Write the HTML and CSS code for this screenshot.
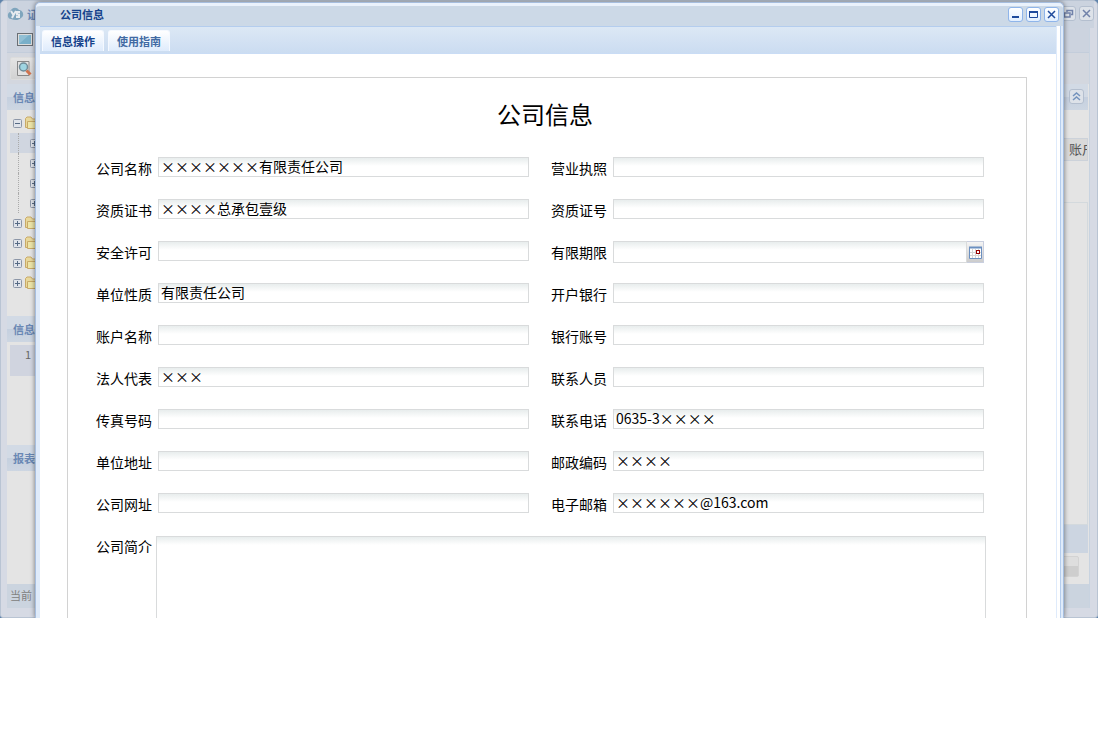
FILE: index.html
```
<!DOCTYPE html>
<html lang="zh-CN">
<head>
    <meta charset="UTF-8">
    <meta name="viewport" content="width=device-width, initial-scale=1.0">
    <title>公司信息</title>
    <link rel="stylesheet" href="styles.css">
</head>
<body>
    <svg class="defs" aria-hidden="true">
        <symbol id="plus" viewBox="0 0 9 9">
            <rect x="0.5" y="0.5" width="8" height="8" rx="1" fill="#dfe3ea" stroke="#8d97a8"/>
            <path d="M2 4.5H7M4.5 2V7" stroke="#566a85"/>
        </symbol>
        <symbol id="minus" viewBox="0 0 9 9">
            <rect x="0.5" y="0.5" width="8" height="8" rx="1" fill="#dfe3ea" stroke="#8d97a8"/>
            <path d="M2 4.5H7" stroke="#566a85"/>
        </symbol>
        <symbol id="folder" viewBox="0 0 16 14">
            <path d="M1.5 11.5V2.5L3 1H7L8.5 3H13.5V11.5Z" fill="#e8d89c" stroke="#c9aa68"/>
            <path d="M3.5 12.5V5.5H15.5V12.5Z" fill="#ede5a8" stroke="#c9aa68"/>
        </symbol>
    </svg>
    <div class="desktop">
        <!-- main window -->
        <div class="app">
            <div class="app-head">
                <svg width="17" height="14" viewBox="0 0 17 14">
                    <path d="M4 12C0 12 0 6 3 5C4 1 9-1 12 3C16 3 18 9 14 11C11 14 7 13 4 12Z" fill="#7fa5bd"/>
                    <path d="M4 4L6.5 8L9 4M6.5 8L5 11M13 5H10V7.5H12V10H9" fill="none" stroke="#e6ebef" stroke-width="2"/>
                </svg>
                <span>证</span>
                <div class="tools">
                    <button class="tool" aria-label="还原">
                        <svg width="13" height="13" viewBox="0 0 13 13"><path d="M5 5V3.5H10.5V7.5H9M2.5 6H8V10H2.5Z" fill="none" stroke="#7182aa" stroke-width="1.5"/></svg>
                    </button>
                    <button class="tool" aria-label="关闭主窗口">
                        <svg width="13" height="13" viewBox="0 0 13 13"><path d="M3 3L10 10M10 3L3 10" stroke="#7182aa" stroke-width="1.5"/></svg>
                    </button>
                </div>
            </div>
            <div class="app-body">
                <div class="app-tabs">
                    <svg width="16" height="14" viewBox="0 0 16 14">
                        <rect x="0.5" y="0.5" width="15" height="12" fill="#ddd" stroke="#6a6f75"/>
                        <rect x="2" y="2" width="12" height="9" fill="#79afc9"/>
                        <path d="M2 11V2H12Z" fill="#91bfd4"/>
                    </svg>
                </div>
                <div class="app-tools">
                    <button class="search" aria-label="查询">
                        <svg width="16" height="17" viewBox="0 0 16 17">
                            <path d="M1.5 1V15.5H13V1.5H1" fill="#e2e2e2" stroke="#888"/>
                            <circle cx="7.5" cy="7" r="4" fill="#9ed5e2" stroke="#708c98" stroke-width="1.5"/>
                            <path d="M10.5 10.5L14.5 14.5" stroke="#d0734e" stroke-width="3"/>
                        </svg>
                    </button>
                </div>
                <div class="app-main">
                    <div class="side">
                        <h2>信息</h2>
                        <ul class="tree">
                            <li><svg width="9" height="9"><use href="#minus"/></svg><svg width="16" height="14"><use href="#folder"/></svg></li>
                            <li class="child on"><svg width="9" height="9"><use href="#plus"/></svg></li>
                            <li class="child"><svg width="9" height="9"><use href="#plus"/></svg></li>
                            <li class="child"><svg width="9" height="9"><use href="#plus"/></svg></li>
                            <li class="child"><svg width="9" height="9"><use href="#plus"/></svg></li>
                            <li><svg width="9" height="9"><use href="#plus"/></svg><svg width="16" height="14"><use href="#folder"/></svg></li>
                            <li><svg width="9" height="9"><use href="#plus"/></svg><svg width="16" height="14"><use href="#folder"/></svg></li>
                            <li><svg width="9" height="9"><use href="#plus"/></svg><svg width="16" height="14"><use href="#folder"/></svg></li>
                            <li><svg width="9" height="9"><use href="#plus"/></svg><svg width="16" height="14"><use href="#folder"/></svg></li>
                        </ul>
                        <h2>信息</h2>
                        <div class="notice"><p>1</p></div>
                        <h2>报表</h2>
                    </div>
                    <div class="content">
                        <div class="content-head">
                            <button class="tool" aria-label="收起">
                                <svg width="13" height="13" viewBox="0 0 13 13"><path d="M3 6L6.5 3L10 6M3 10L6.5 7L10 10" fill="none" stroke="#7493bd" stroke-width="1.5"/></svg>
                            </button>
                        </div>
                        <div class="grid-head"><span>账户</span></div>
                        <div class="grid-body"></div>
                        <div class="pager"></div>
                        <div class="actions"></div>
                    </div>
                </div>
                <div class="status">当前</div>
            </div>
        </div>

        <!-- company dialog -->
        <div class="dialog">
            <div class="dialog-head">
                <strong>公司信息</strong>
                <div class="tools">
                    <button class="tool" aria-label="最小化">
                        <svg width="13" height="13" viewBox="0 0 13 13"><path d="M3 9H10" stroke="#1f4a9c" stroke-width="2"/></svg>
                    </button>
                    <button class="tool" aria-label="最大化">
                        <svg width="13" height="13" viewBox="0 0 13 13"><path d="M2.5 3.5H10.5V9.5H2.5Z" fill="none" stroke="#1f4a9c"/><path d="M2 4H11" stroke="#1f4a9c" stroke-width="2"/></svg>
                    </button>
                    <button class="tool" aria-label="关闭">
                        <svg width="13" height="13" viewBox="0 0 13 13"><path d="M3 3L10 10M10 3L3 10" stroke="#1f4a9c" stroke-width="1.5"/></svg>
                    </button>
                </div>
            </div>
            <div class="dialog-body">
                <div class="panel">
                    <div class="tabs">
                        <button class="tab active">信息操作</button>
                        <button class="tab">使用指南</button>
                    </div>
                    <form class="sheet">
                        <h1>公司信息</h1>
                        <div class="fields">
                            <label for="name">公司名称</label>
                            <input id="name" type="text" value="×××××××有限责任公司">
                            <label for="license">营业执照</label>
                            <input id="license" type="text">

                            <label for="cert">资质证书</label>
                            <input id="cert" type="text" value="××××总承包壹级">
                            <label for="certNo">资质证号</label>
                            <input id="certNo" type="text">

                            <label for="safety">安全许可</label>
                            <input id="safety" type="text">
                            <label for="expire">有限期限</label>
                            <div class="date">
                                <input id="expire" type="text">
                                <button type="button" aria-label="选择日期">
                                    <svg width="13" height="13" viewBox="0 0 13 13">
                                        <path d="M0.5 1.5H12.5V12.5H0.5Z" fill="#fff" stroke="#6a8fc0"/>
                                        <path d="M0 1.5H13" stroke="#6a8fc0" stroke-width="2"/>
                                        <path d="M3.5 3V12M6.5 3V12M9.5 3V12M1 6.5H12M1 9.5H12" stroke="#d5d5d5"/>
                                        <rect x="7.5" y="4.5" width="3" height="3" fill="#fff" stroke="#900"/>
                                    </svg>
                                </button>
                            </div>

                            <label for="kind">单位性质</label>
                            <input id="kind" type="text" value="有限责任公司">
                            <label for="bank">开户银行</label>
                            <input id="bank" type="text">

                            <label for="account">账户名称</label>
                            <input id="account" type="text">
                            <label for="bankNo">银行账号</label>
                            <input id="bankNo" type="text">

                            <label for="legal">法人代表</label>
                            <input id="legal" type="text" value="×××">
                            <label for="contact">联系人员</label>
                            <input id="contact" type="text">

                            <label for="fax">传真号码</label>
                            <input id="fax" type="text">
                            <label for="phone">联系电话</label>
                            <input id="phone" type="text" value="0635-3××××">

                            <label for="address">单位地址</label>
                            <input id="address" type="text">
                            <label for="zip">邮政编码</label>
                            <input id="zip" type="text" value="××××">

                            <label for="site">公司网址</label>
                            <input id="site" type="text">
                            <label for="email">电子邮箱</label>
                            <input id="email" type="text" value="××××××@163.com">

                            <label for="intro">公司简介</label>
                            <textarea id="intro"></textarea>
                        </div>
                    </form>
                </div>
            </div>
        </div>
    </div>
</body>
</html>
```
FILE: styles.css
```
*{
    box-sizing: border-box;
}
body{
    margin: 0;
    background: #fff;
    font-family: "Noto Sans CJK SC", sans-serif;
    font-size: 14px;
    color: #000;
}
button{
    margin: 0;
    padding: 0;
    font-family: inherit;
}
svg{
    display: block;
    flex: none;
}
.defs{
    display: none;
}
/* the dialog and the main window share one cell */
.desktop{
    display: grid;
    grid-template-columns: minmax(0, 1fr);
    overflow: hidden;
    background: #5f83ab;
}
.app, .dialog{
    grid-area: 1 / 1;
}
.tools{
    display: flex;
    gap: 3px;
    margin-left: auto;
}
.tool{
    width: 15px;
    height: 15px;
    border: 1px solid #8fb5ea;
    border-radius: 3px;
    background: linear-gradient(#fff, #e2efff);
}
.app .tool{
    border-color: #b4bfcf;
    background: #dde2e9;
}

/* main window */
.app{
    display: flex;
    flex-direction: column;
    padding: 0 7px 9px 6px;
    border: 1px solid #b9c4d3;
    border-radius: 5px 5px 3px 3px;
    background: #d6dae4;
    color: #6a88b4;
    font-size: 11px;
}
.app-head{
    display: flex;
    align-items: center;
    gap: 3px;
    height: 27px;
    margin-right: -4px;
    padding-bottom: 2px;
    background: #cbd3df;
    font-weight: bold;
}
.app-body{
    flex: 1;
    display: flex;
    flex-direction: column;
    border-right: 1px solid #c8d3e0;
    background: #e4e4e4;
}
.app-tabs{
    height: 25px;
    padding: 5px 10px;
    border-bottom: 1px solid #c3cddb;
    background: #ccd3df;
}
.app-tools{
    height: 31px;
    padding: 4px 3px;
    background: #d3d7df;
}
.search{
    padding: 2px 5px;
    border: 1px solid #dcdcdc;
    border-radius: 2px;
    background: linear-gradient(#e4e4e4, #d2d2d2);
}
.app-main{
    flex: 1;
    display: flex;
}
.side{
    width: 200px;
}
.side h2{
    margin: 0;
    padding-left: 6px;
    height: 26px;
    line-height: 26px;
    font-size: 11px;
    background: linear-gradient(#d2dae5 50%, #c5d0df 50%, #cdd6e2);
}
.tree{
    height: 206px;
    margin: 0;
    padding: 3px 3px 0;
    list-style: none;
}
.tree li{
    display: flex;
    align-items: center;
    gap: 2px;
    height: 20px;
    padding-left: 3px;
}
.tree .child{
    gap: 11px;
    padding-left: 0;
}
.tree .child::before{
    content: "";
    width: 8px;
    height: 20px;
    border-right: 1px dotted #aaa;
}
.tree .on{
    background: #d0d6e0;
}
.notice{
    height: 103px;
    padding: 3px;
}
.notice p{
    margin: 0;
    height: 31px;
    padding: 1px 15px;
    background: #d0d4df;
    color: #666;
}
.content{
    flex: 1;
    display: flex;
    flex-direction: column;
    padding-right: 1px;
}
.content-head{
    display: flex;
    justify-content: flex-end;
    height: 26px;
    padding: 5px 4px;
    background: linear-gradient(#d2dae5 50%, #c5d0df 50%, #cdd6e2);
}
.grid-head{
    display: flex;
    justify-content: flex-end;
    height: 23px;
    margin-top: 28px;
    border: 1px solid #ccd2da;
    background: #d9d9d9;
    color: #555;
    font-size: 13px;
    line-height: 20px;
}
.grid-head span{
    width: 18px;
    overflow: hidden;
    white-space: nowrap;
}
.grid-body{
    flex: 1;
    margin-top: 41px;
    border: 1px solid #d3d9dd;
}
.pager{
    height: 28px;
    background: #ccd5e1;
}
.actions{
    height: 21px;
    margin: 3px 9px 7px 0;
    border: 1px solid #d3d3d3;
    border-radius: 2px;
    background: linear-gradient(#dedede 50%, #cecece 50%);
}
.status{
    height: 24px;
    padding-left: 3px;
    background: #cbd4df;
    color: #808080;
    line-height: 22px;
}

/* dialog */
.dialog{
    margin: 2px 34px 0 35px;
    border: 1px solid #a6bedf;
    border-bottom: 0;
    border-radius: 5px 5px 0 0;
    background: #dfebfa;
    box-shadow: 0 0 5px rgba(0, 0, 0, 0.5);
}
.dialog-head{
    display: flex;
    align-items: center;
    height: 23px;
    padding: 0 4px 4px 24px;
    border-top: 3px solid #eaf2fc;
    border-radius: 5px 5px 0 0;
    background: #ccd9e7;
    color: #15428b;
    font-size: 11px;
}
.dialog-head strong{
    line-height: 16px;
}
.dialog-body{
    margin: 0 2px 0 4px;
    padding-right: 3px;
    border-right: 1px solid #b4cdee;
    background: #fff;
}
.panel{
    border-right: 1px solid #dfebfb;
}
.tabs{
    display: flex;
    align-items: flex-end;
    gap: 4px;
    height: 28px;
    padding: 0 3px 2px 2px;
    border-top: 1px solid #b4cdee;
    border-bottom: 1px solid #c9dcf5;
    background: linear-gradient(#dce8f5, #cbdcf1);
}
.tab{
    height: 21px;
    padding: 0 8px;
    border: 1px solid #f5f9ff;
    border-bottom: 0;
    border-radius: 3px 3px 0 0;
    background: linear-gradient(#fff, #deebfc);
    color: #416aa3;
    font-size: 11px;
    font-weight: bold;
    line-height: 20px;
}
.tab.active{
    color: #15428b;
}
.sheet{
    margin: 23px 29px 0 27px;
    padding: 18px 42px 0 28px;
    border: 1px solid #d2d2d2;
    border-bottom: 0;
}
.sheet h1{
    margin: 0 0 25px 10px;
    font-size: 24px;
    font-weight: normal;
    line-height: 36px;
    text-align: center;
}
.fields{
    display: grid;
    grid-template-columns: 57px minmax(0, 1fr) 74px minmax(0, 1fr);
    column-gap: 5px;
    row-gap: 20px;
    align-items: start;
}
.fields label{
    height: 22px;
    line-height: 22px;
    white-space: nowrap;
}
.fields label:nth-child(4n + 3){
    padding-left: 17px;
}
.fields input, .fields textarea{
    height: 20px;
    padding: 0 2px 2px;
    border: 1px solid #d9dbdc;
    border-radius: 0;
    outline: none;
    background: linear-gradient(#e8eded, #fff 8px);
    font-family: inherit;
    font-size: 14px;
    line-height: 16px;
}
.fields .date{
    display: flex;
}
.date input{
    flex: 1;
    min-width: 0;
    height: 22px;
}
.date button{
    display: grid;
    place-items: center;
    width: 17px;
    border: 1px solid #c9cfdf;
    border-left: 0;
    background: linear-gradient(#f4f4f4, #ccc);
}
.fields textarea{
    display: block;
    grid-column: 2 / 5;
    width: calc(100% + 4px);
    height: 82px;
    margin: 1px 0 0 -2px;
    border-bottom: 0;
    resize: none;
}
```
